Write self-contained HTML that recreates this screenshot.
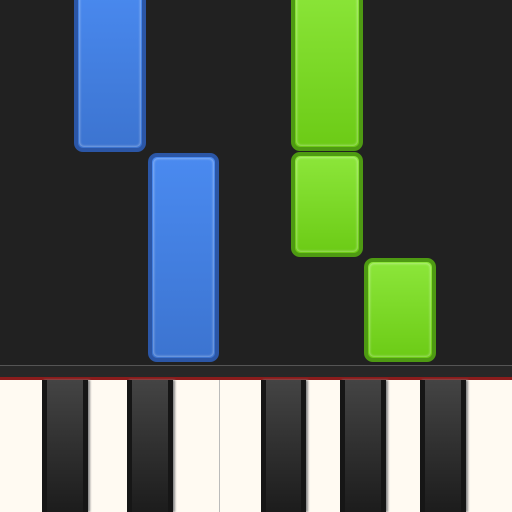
<html><head><style>
body{margin:0;width:512px;height:512px;background:#212121;position:relative;overflow:hidden}
.n{position:absolute;box-sizing:border-box;border-radius:9px;border:4px solid}
.n::after{content:"";position:absolute;left:1px;top:1px;right:1px;bottom:1px;border-radius:5px;box-shadow:inset 0 0 2px 1px rgba(255,255,255,.35)}
.b{border-color:#2b56a6;background:linear-gradient(#4a8af0,#3c74d0)}
.g{border-color:#4e9a12;background:linear-gradient(#8ce63a,#6ccb16)}
.k{position:absolute;top:380px;height:132px;background:linear-gradient(#444,#1c1c1c);border-left:5px solid #161616;border-right:5px solid #161616;box-sizing:border-box;box-shadow:2px 0 2px #888}
</style></head><body>
<div class="n b" style="left:74px;top:-20px;width:72px;height:172px"></div>
<div class="n b" style="left:148px;top:153px;width:71px;height:209px"></div>
<div class="n g" style="left:291px;top:-20px;width:72px;height:171px"></div>
<div class="n g" style="left:291px;top:152px;width:72px;height:105px"></div>
<div class="n g" style="left:364px;top:258px;width:72px;height:104px"></div>
<div style="position:absolute;left:0;top:365px;width:512px;height:1px;background:#555"></div>
<div style="position:absolute;left:0;top:366px;width:512px;height:12px;background:#272727"></div>
<div style="position:absolute;left:0;top:377px;width:512px;height:3px;background:#8a1c1c"></div>
<div style="position:absolute;left:0;top:380px;width:512px;height:132px;background:#fffaf2"></div>
<div style="position:absolute;left:219px;top:380px;width:1px;height:132px;background:#bbb"></div>
<div class="k" style="left:42px;width:46px"></div>
<div class="k" style="left:127px;width:46px"></div>
<div class="k" style="left:261px;width:45px"></div>
<div class="k" style="left:340px;width:46px"></div>
<div class="k" style="left:420px;width:46px"></div>
</body></html>
